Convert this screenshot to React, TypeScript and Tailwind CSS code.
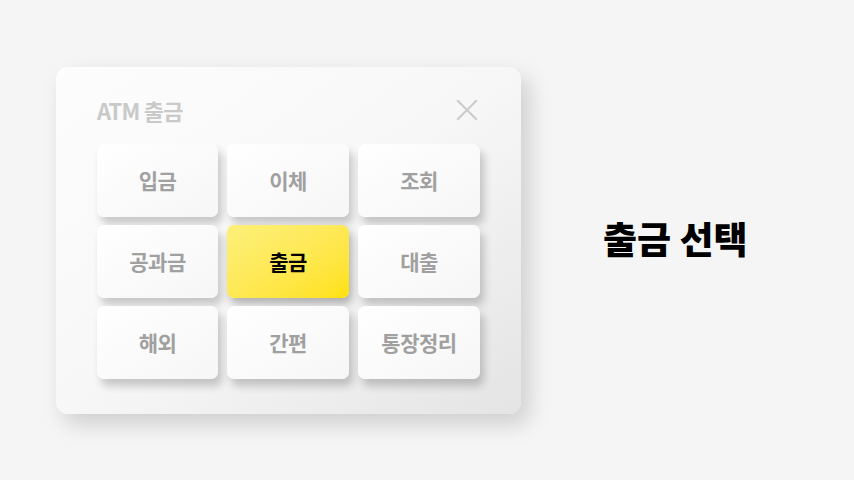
const items = [
  { label: '입금' },
  { label: '이체' },
  { label: '조회' },
  { label: '공과금' },
  { label: '출금', active: true },
  { label: '대출' },
  { label: '해외' },
  { label: '간편' },
  { label: '통장정리' },
];

export default function App() {
  return (
    <div
      className="w-[854px] h-[480px] bg-[#f5f5f5] flex items-start overflow-hidden"
      style={{ fontFamily: '"Noto Sans CJK KR", "Noto Sans", sans-serif' }}
    >
      {/* panel */}
      <div className="ml-[56px] mt-[67px] w-[465px] h-[347px] rounded-[12px] bg-gradient-to-br from-[#fdfdfd] via-[#f7f7f7] to-[#e4e4e4] shadow-[8px_10px_22px_rgba(0,0,0,0.16)] pl-[41px] pr-[42px] pt-[28px]">
        <div className="flex items-center justify-between h-[30px]">
          <span className="text-[22px] font-bold text-[#c9c9c9] tracking-[-0.8px]">ATM 출금</span>
          <svg width="22" height="22" viewBox="0 0 22 22" className="mr-[1px]">
            <path d="M2 2L20 20M20 2L2 20" stroke="#cccccc" strokeWidth="2.2" strokeLinecap="square" />
          </svg>
        </div>
        <div className="mt-[19px] grid grid-cols-[121px_122px_122px] gap-x-[9px] gap-y-[8px]">
          {items.map((it) => (
            <div
              key={it.label}
              className={`h-[73px] rounded-[7px] flex items-center justify-center text-[21px] tracking-[-0.5px] ${
                it.active
                  ? 'bg-gradient-to-br from-[#fdf07a] to-[#ffe100] text-black font-bold shadow-[3px_6px_9px_rgba(0,0,0,0.28)]'
                  : 'bg-gradient-to-br from-[#ffffff] to-[#f6f6f6] text-[#a0a0a0] font-semibold shadow-[4px_7px_9px_rgba(0,0,0,0.2)]'
              }`}
            >
              {it.label}
            </div>
          ))}
        </div>
      </div>
      {/* caption */}
      <div className="ml-[82px] mt-[211px] text-[37px] font-black text-black">
        출금 선택
      </div>
    </div>
  );
}
